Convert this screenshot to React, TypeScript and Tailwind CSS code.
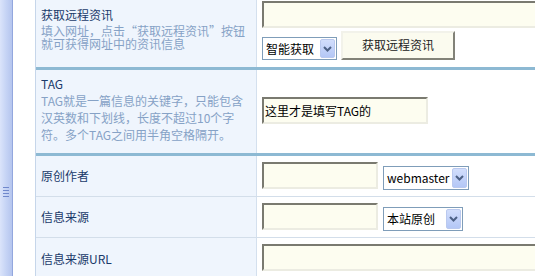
import React from "react";

const inputCls =
  "block h-[27px] border-2 border-[#ecece2] border-t-[#7a7a70] border-l-[#7a7a70] bg-[#fdfdf0] pl-[1px] text-[12px] text-black outline-none";

function Chevron() {
  return (
    <svg width="9" height="6" viewBox="0 0 9 6" className="block">
      <path d="M1 1 L4.5 4.5 L8 1" fill="none" stroke="#4d6185" strokeWidth="2" />
    </svg>
  );
}

function FakeSelect({ label, width, height = "h-[24px]" }: { label: string; width: string; height?: string }) {
  return (
    <div className={`flex ${width} ${height} shrink-0 items-center justify-between border border-[#7f9db9] bg-white pl-[3px] pr-[1px]`}>
      <span className="whitespace-nowrap text-[12px] leading-none text-black">{label}</span>
      <span className="flex h-[calc(100%-2px)] w-[15px] items-center justify-center rounded-[2px] border border-[#bac9ef] bg-gradient-to-b from-[#d2defc] to-[#b4c7f6]">
        <Chevron />
      </span>
    </div>
  );
}

function LeftCell({ children, className = "" }: { children: React.ReactNode; className?: string }) {
  return (
    <div className={`w-[221px] shrink-0 border-r border-[#d4e0ee] bg-[#eff5fd] pl-[5px] ${className}`}>
      {children}
    </div>
  );
}

export default function App() {
  return (
    <div className="flex h-[276px] w-[535px] overflow-hidden bg-white font-['Noto_Sans_CJK_SC',sans-serif] text-[12px]">
      {/* splitter bar */}
      <div className="flex w-[13px] shrink-0 flex-col items-center border-r border-[#93a7de] bg-gradient-to-r from-[#dbe4fa] via-[#c6d4f5] to-[#b5c5ee] pt-[187px]">
        <div className="flex flex-col gap-[2px]">
          <div className="h-px w-[6px] bg-[#7088cc]" />
          <div className="h-px w-[6px] bg-[#7088cc]" />
          <div className="h-px w-[6px] bg-[#7088cc]" />
          <div className="h-px w-[6px] bg-[#7088cc]" />
        </div>
      </div>
      <div className="w-[22px] shrink-0" />

      {/* form table */}
      <div className="flex min-w-0 flex-1 flex-col overflow-hidden border-l border-[#c6d6ea]">
        {/* 获取远程资讯 */}
        <div className="flex h-[67px] shrink-0">
          <LeftCell className="pt-[7px]">
            <div className="leading-[16px] text-[#1a3a6a]">获取远程资讯</div>
            <div className="mt-[1px] leading-[13px] text-[#86a2c6]">
              填入网址，点击“获取远程资讯”按钮
              <br />
              就可获得网址中的资讯信息
            </div>
          </LeftCell>
          <div className="min-w-0 flex-1 pl-[5px] pt-[1px]">
            <input readOnly value="" className={`${inputCls} w-[320px]`} />
            <div className="mt-[3px] flex items-end gap-[4px]">
              <FakeSelect label="智能获取" width="w-[75px]" height="h-[23px]" />
              <button className="h-[29px] w-[114px] shrink-0 border-2 border-[#f2f2ea] border-r-[#828278] border-b-[#828278] bg-[#fbfbef] pb-[2px] text-[12px] text-[#222]">
                获取远程资讯
              </button>
            </div>
          </div>
        </div>
        <div className="h-[3px] shrink-0 bg-[#8db9d3]" />

        {/* TAG */}
        <div className="flex h-[83px] shrink-0">
          <LeftCell className="pt-[5px]">
            <div className="leading-[17px] text-[#1a3a6a]">TAG</div>
            <div className="leading-[17px] text-[#86a2c6]">
              TAG就是一篇信息的关键字，只能包含
              <br />
              汉英数和下划线，长度不超过10个字
              <br />
              符。多个TAG之间用半角空格隔开。
            </div>
          </LeftCell>
          <div className="min-w-0 flex-1 pl-[5px] pt-[27px]">
            <input readOnly value="这里才是填写TAG的" className={`${inputCls} h-[26px] w-[166px]`} />
          </div>
        </div>
        <div className="h-[3px] shrink-0 bg-[#8db9d3]" />

        {/* 原创作者 */}
        <div className="flex h-[41px] shrink-0 border-b border-[#d3deea]">
          <LeftCell className="flex items-center">
            <span className="text-[#1a3a6a]">原创作者</span>
          </LeftCell>
          <div className="flex min-w-0 flex-1 items-start gap-[5px] pl-[5px]">
            <input readOnly value="" className={`${inputCls} mt-[6px] w-[116px]`} />
            <div className="mt-[10px]">
              <FakeSelect label="webmaster" width="w-[86px]" />
            </div>
          </div>
        </div>

        {/* 信息来源 */}
        <div className="flex h-[41px] shrink-0 border-b border-[#d3deea]">
          <LeftCell className="flex items-center">
            <span className="text-[#1a3a6a]">信息来源</span>
          </LeftCell>
          <div className="flex min-w-0 flex-1 items-start gap-[5px] pl-[5px]">
            <input readOnly value="" className={`${inputCls} mt-[6px] w-[116px]`} />
            <div className="mt-[10px]">
              <FakeSelect label="本站原创" width="w-[80px]" />
            </div>
          </div>
        </div>

        {/* 信息来源URL */}
        <div className="flex h-[41px] shrink-0">
          <LeftCell className="flex items-center">
            <span className="text-[#1a3a6a]">信息来源URL</span>
          </LeftCell>
          <div className="min-w-0 flex-1 pl-[5px] pt-[6px]">
            <input readOnly value="" className={`${inputCls} w-[320px]`} />
          </div>
        </div>
      </div>
    </div>
  );
}
